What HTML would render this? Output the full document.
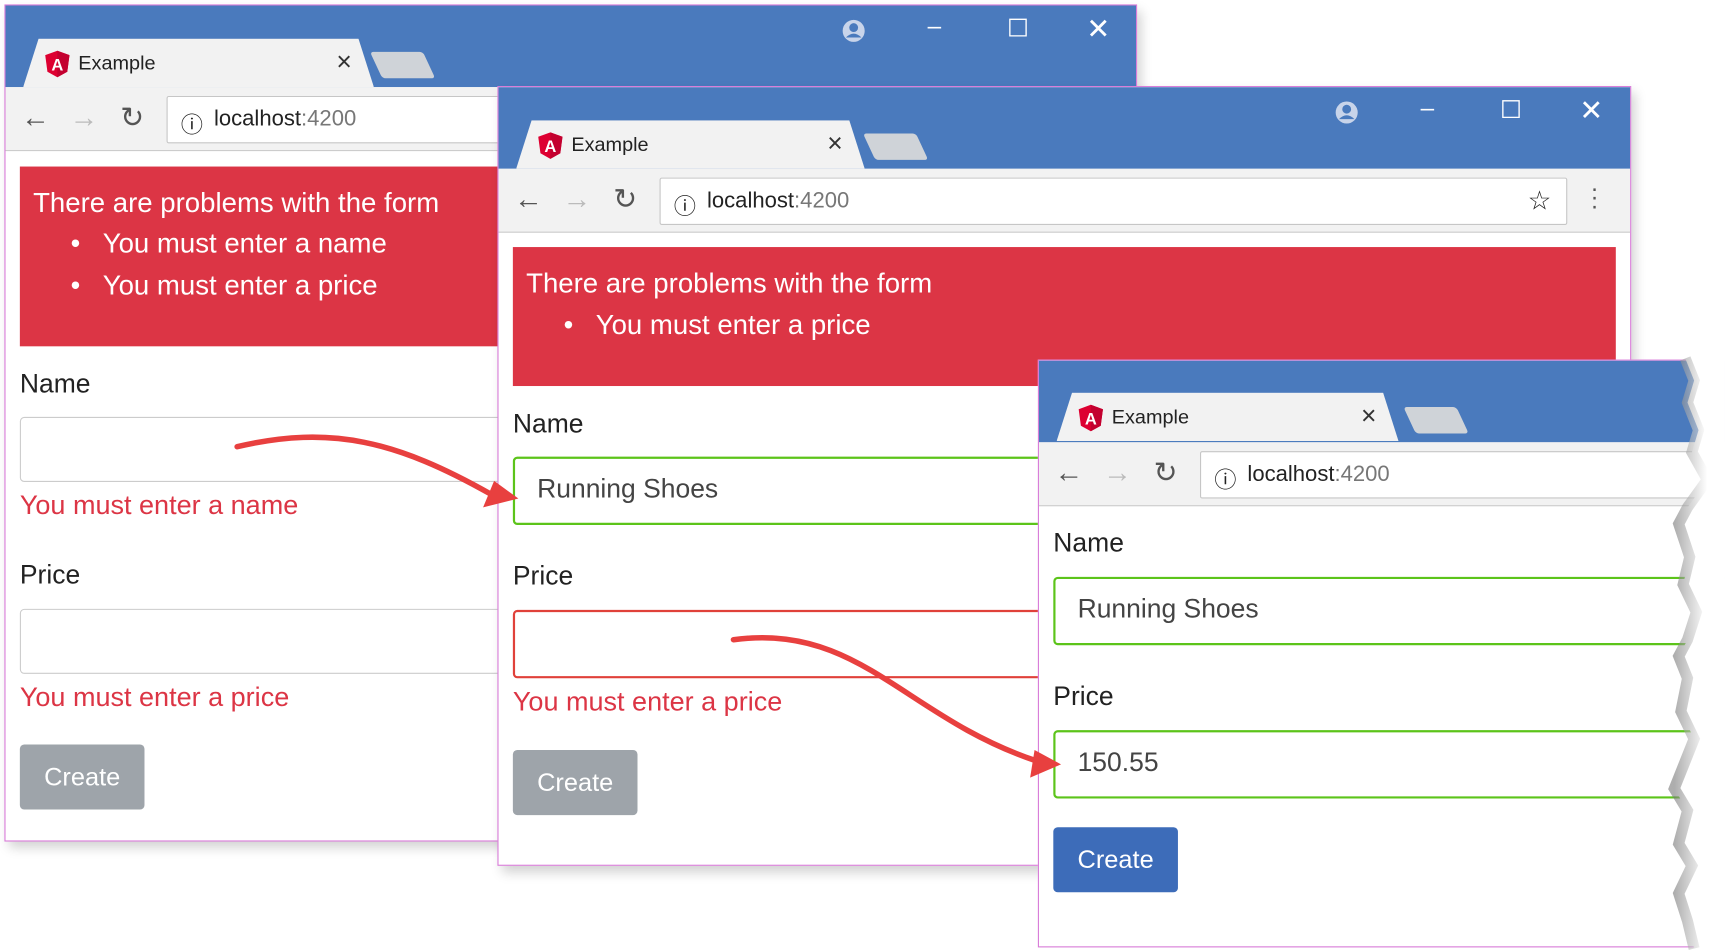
<!DOCTYPE html>
<html><head><meta charset="utf-8"><style>
*{box-sizing:border-box;margin:0;padding:0}
body{width:1725px;height:951px;background:#fff;overflow:hidden;font-family:"Liberation Sans",sans-serif}
#s{position:absolute;left:0;top:0;width:1564px;height:862px;transform:scale(1.10294);transform-origin:0 0}
.w{position:absolute;border:1.5px solid #d87ad8;background:#fff;overflow:hidden;box-shadow:4px 6px 10px rgba(0,0,0,.18)}
.tb{position:absolute;left:0;top:0;right:0;height:74px;background:#4a7abd}
.tab{position:absolute;top:30px;height:44px;background:#f2f2f2;clip-path:polygon(0 100%,14px 0,calc(100% - 14px) 0,100% 100%);font-size:18px;color:#222}
.tab .t{position:absolute;left:50px;top:12px}
.tab .x{position:absolute;right:20px;top:8px;font-size:24px;color:#333}
.ng{position:absolute;left:18px;top:10px}
.nt{position:absolute;top:42px;width:48px;height:24px;background:#cfd3d8;transform:skewX(25deg);border-radius:3px}
.tl{position:absolute;top:74px;left:0;right:0;height:58px;background:#f2f2f2;border-bottom:1px solid #ccc}
.ad{position:absolute;top:8px;height:43px;background:#fff;border:1px solid #c6c6c6;border-radius:2px;font-size:20px;color:#222}
.ad span{position:absolute;left:42px;top:9px}
.ad i{font-style:normal;color:#777}
.ic{position:absolute;top:12px;font-size:26px;color:#555}
.al{position:absolute;background:#dc3545;color:#fff;font-size:25px}
.lb{position:absolute;font-size:24px;color:#222}
.in{position:absolute;height:60px;border:1.5px solid #ccc;border-radius:4px;font-size:24px;color:#444;padding:14px 20px}
.er{position:absolute;font-size:24.5px;color:#dc3545}
.bt{position:absolute;width:113px;height:59px;border-radius:4px;color:#fff;font-size:23px;text-align:center;line-height:59px}
.wc{position:absolute;top:-1px;font-size:22px;color:#fff}
</style></head><body><div id="s">

<!-- window 1 -->
<div class="w" style="left:4px;top:4px;width:1027px;height:759px">
<div class="tb"></div>
<svg style="position:absolute;left:758px;top:12px" width="22" height="22" viewBox="0 0 22 22"><circle cx="11" cy="11" r="10" fill="#c8d4ea"/><circle cx="11" cy="8" r="4" fill="#4a7abd"/><path d="M4 17 Q11 10 18 17" fill="#4a7abd"/></svg>
<div class="wc" style="left:836px;top:6px">–</div>
<div class="wc" style="left:908px;top:8px">☐</div>
<div class="wc" style="left:980px;top:6px;font-size:26px">✕</div>
<div class="tab" style="left:16px;width:318px"><svg class="ng" width="26" height="26" viewBox="0 0 26 26"><path d="M13 1 L24 5 L22 20 L13 25 L4 20 L2 5Z" fill="#dd0031"/><path d="M13 1 L24 5 L22 20 L13 25Z" fill="#c3002f"/><text x="13" y="19" font-size="15" font-weight="bold" fill="#fff" text-anchor="middle" font-family="Liberation Sans">A</text></svg><span class="t">Example</span><span class="x">×</span></div>
<div class="nt" style="left:336px"></div>
<div class="tl"><span class="ic" style="left:14px">←</span><span class="ic" style="left:58px;color:#bbb">→</span><span class="ic" style="left:104px">↻</span>
<div class="ad" style="left:146px;width:900px"><span style="left:12px;font-size:20px">ⓘ</span><span>localhost<i>:4200</i></span></div></div>
<div class="al" style="left:13px;top:146px;width:1000px;height:163px"><div style="position:absolute;left:12px;top:19px">There are problems with the form</div>
<div style="position:absolute;left:46px;top:56px">•&nbsp;&nbsp; You must enter a name</div><div style="position:absolute;left:46px;top:94px">•&nbsp;&nbsp; You must enter a price</div></div>
<div class="lb" style="left:13px;top:330px">Name</div>
<div class="in" style="left:13px;top:373px;width:1000px;height:59px"></div>
<div class="er" style="left:13px;top:440px">You must enter a name</div>
<div class="lb" style="left:13px;top:503px">Price</div>
<div class="in" style="left:13px;top:547px;width:1000px;height:59px"></div>
<div class="er" style="left:13px;top:614px">You must enter a price</div>
<div class="bt" style="left:13px;top:670px;background:#9ea4aa">Create</div>
</div>

<!-- window 2 -->
<div class="w" style="left:451px;top:78px;width:1028px;height:707px">
<div class="tb"></div>
<svg style="position:absolute;left:758px;top:12px" width="22" height="22" viewBox="0 0 22 22"><circle cx="11" cy="11" r="10" fill="#c8d4ea"/><circle cx="11" cy="8" r="4" fill="#4a7abd"/><path d="M4 17 Q11 10 18 17" fill="#4a7abd"/></svg>
<div class="wc" style="left:836px;top:6px">–</div>
<div class="wc" style="left:908px;top:8px">☐</div>
<div class="wc" style="left:980px;top:6px;font-size:26px">✕</div>
<div class="tab" style="left:16px;width:316px"><svg class="ng" width="26" height="26" viewBox="0 0 26 26"><path d="M13 1 L24 5 L22 20 L13 25 L4 20 L2 5Z" fill="#dd0031"/><path d="M13 1 L24 5 L22 20 L13 25Z" fill="#c3002f"/><text x="13" y="19" font-size="15" font-weight="bold" fill="#fff" text-anchor="middle" font-family="Liberation Sans">A</text></svg><span class="t">Example</span><span class="x">×</span></div>
<div class="nt" style="left:336px"></div>
<div class="tl"><span class="ic" style="left:14px">←</span><span class="ic" style="left:58px;color:#bbb">→</span><span class="ic" style="left:104px">↻</span>
<div class="ad" style="left:146px;width:823px"><span style="left:12px;font-size:20px">ⓘ</span><span>localhost<i>:4200</i></span><span style="left:786px;font-size:24px;top:6px">☆</span></div>
<span class="ic" style="left:990px;font-size:22px;top:14px;line-height:8px">·<br>·<br>·</span></div>
<div class="al" style="left:13px;top:145px;width:1000px;height:126px"><div style="position:absolute;left:12px;top:19px">There are problems with the form</div>
<div style="position:absolute;left:46px;top:57px">•&nbsp;&nbsp; You must enter a price</div></div>
<div class="lb" style="left:13px;top:292px">Name</div>
<div class="in" style="left:13px;top:335px;width:1000px;height:62px;border:2.5px solid #5cc41a">Running Shoes</div>
<div class="lb" style="left:13px;top:430px">Price</div>
<div class="in" style="left:13px;top:474px;width:1000px;height:62px;border:2.5px solid #e0413a"></div>
<div class="er" style="left:13px;top:544px">You must enter a price</div>
<div class="bt" style="left:13px;top:601px;background:#9ea4aa">Create</div>
</div>

<!-- window 3 -->
<div class="w" style="left:941px;top:326px;width:640px;height:533px;box-shadow:none">
<div class="tb"></div>
<div class="tab" style="left:16px;width:310px;top:29px"><svg class="ng" width="26" height="26" viewBox="0 0 26 26"><path d="M13 1 L24 5 L22 20 L13 25 L4 20 L2 5Z" fill="#dd0031"/><path d="M13 1 L24 5 L22 20 L13 25Z" fill="#c3002f"/><text x="13" y="19" font-size="15" font-weight="bold" fill="#fff" text-anchor="middle" font-family="Liberation Sans">A</text></svg><span class="t">Example</span><span class="x">×</span></div>
<div class="nt" style="left:336px"></div>
<div class="tl"><span class="ic" style="left:14px">←</span><span class="ic" style="left:58px;color:#bbb">→</span><span class="ic" style="left:104px">↻</span>
<div class="ad" style="left:146px;width:520px"><span style="left:12px;font-size:20px">ⓘ</span><span>localhost<i>:4200</i></span></div></div>
<div class="lb" style="left:13px;top:152px">Name</div>
<div class="in" style="left:13px;top:196px;width:620px;height:62px;border:2.5px solid #5cc41a">Running Shoes</div>
<div class="lb" style="left:13px;top:291px">Price</div>
<div class="in" style="left:13px;top:335px;width:620px;height:62px;border:2.5px solid #5cc41a">150.55</div>
<div class="bt" style="left:13px;top:423px;background:#3d6cb9">Create</div>
</div>
<!-- torn edge -->
<svg style="position:absolute;left:1500px;top:315px" width="64" height="547" viewBox="0 0 64 547">
<defs><linearGradient id="g" x1="0" x2="1"><stop offset="0" stop-color="#777"/><stop offset="1" stop-color="#fff"/></linearGradient></defs>
<path d="M28 10 L36 30 L30 50 L40 75 L34 95 L48 120 L30 145 L22 160 L32 190 L26 215 L38 240 L30 265 L22 280 L30 300 L24 330 L36 355 L26 380 L18 400 L30 420 L22 450 L34 470 L22 495 L30 520 L36 545 L64 545 L64 0 Z" fill="#fff"/>
<path d="M28 10 L36 30 L30 50 L40 75 L34 95 L48 120 L30 145 L22 160 L32 190 L26 215 L38 240 L30 265 L22 280 L30 300 L24 330 L36 355 L26 380 L18 400 L30 420 L22 450 L34 470 L22 495 L30 520 L36 545" fill="none" stroke="url(#g)" stroke-width="10" opacity=".6"/>
</svg>

<!-- arrows -->
<svg style="position:absolute;left:0;top:0" width="1564" height="862">
<path d="M215 405 C300 385 360 400 445 448" fill="none" stroke="#e8403f" stroke-width="5" stroke-linecap="round"/>
<path d="M470 452 L438 460 L448 436 Z" fill="#e8403f"/>
<path d="M665 580 C780 565 820 650 940 690" fill="none" stroke="#e8403f" stroke-width="5" stroke-linecap="round"/>
<path d="M962 693 L934 705 L938 680 Z" fill="#e8403f"/>
</svg>
</div></body></html>
